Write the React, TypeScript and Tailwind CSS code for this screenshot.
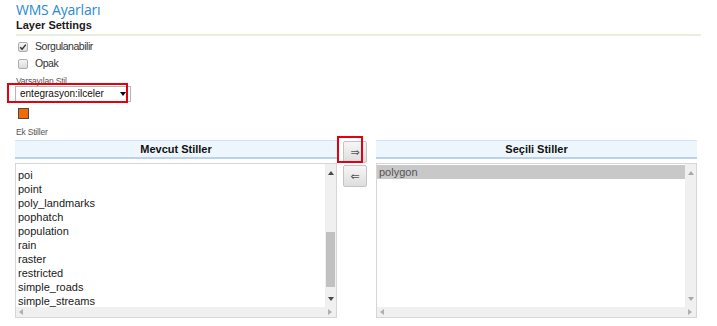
import React from "react";

const leftItems = [
  "poi",
  "point",
  "poly_landmarks",
  "pophatch",
  "population",
  "rain",
  "raster",
  "restricted",
  "simple_roads",
  "simple_streams",
];

function Tri({ dir, color }: { dir: "up" | "down" | "left" | "right"; color: string }) {
  const pts =
    dir === "up"
      ? "0,4 3,0 6,4"
      : dir === "down"
      ? "0,0 6,0 3,4"
      : dir === "left"
      ? "4,0 4,6 0,3"
      : "0,0 0,6 4,3";
  const w = dir === "up" || dir === "down" ? 6 : 4;
  const h = dir === "up" || dir === "down" ? 4 : 6;
  return (
    <svg width={w} height={h} viewBox={`0 0 ${w} ${h}`} className="block">
      <polygon points={pts} fill={color} />
    </svg>
  );
}

function Checkbox({ checked }: { checked?: boolean }) {
  return (
    <div className="w-[10px] h-[10px] rounded-[2px] border border-[#adadad] bg-gradient-to-b from-[#f4f4f4] to-[#dcdcdc] flex items-center justify-center">
      {checked && (
        <svg width="8" height="8" viewBox="0 0 8 8" className="block">
          <path d="M1.2 4.2 L3.1 6.1 L6.8 1.6" fill="none" stroke="#333" strokeWidth="1.4" />
        </svg>
      )}
    </div>
  );
}

function Header({ title }: { title: string }) {
  return (
    <div className="h-[19px] border-t border-t-[#d3e3f1] border-b-2 border-b-[#bcd3e7] bg-[#eef6fd] text-center text-[11px] font-bold leading-[16px] text-[#111]">
      {title}
    </div>
  );
}

function ListBox({
  children,
  thumb,
  padTop,
}: {
  children: React.ReactNode;
  thumb?: boolean;
  padTop: string;
}) {
  const arrow = thumb ? "#4a4a4a" : "#a8a8a8";
  return (
    <div className="mt-[4px] h-[155px] border border-[#d6d6d6] flex flex-col bg-white">
      <div className="flex h-[143px]">
        <div className={`flex-1 overflow-hidden ${padTop}`}>{children}</div>
        <div className="w-[11px] bg-[#f0f0f0] flex flex-col items-center">
          <div className="h-[17px] flex items-center justify-center">
            <Tri dir="up" color={arrow} />
          </div>
          {thumb ? (
            <>
              <div className="h-[51px]" />
              <div className="h-[55px] w-[9px] bg-[#c1c1c1]" />
              <div className="flex-1" />
            </>
          ) : (
            <div className="flex-1" />
          )}
          <div className="h-[17px] flex items-center justify-center">
            <Tri dir="down" color={arrow} />
          </div>
        </div>
      </div>
      <div className="h-[10px] bg-[#f0f0f0] flex items-center justify-between pl-[3px] pr-[4px]">
        <Tri dir="left" color="#b0b0b0" />
        <Tri dir="right" color="#b0b0b0" />
      </div>
    </div>
  );
}

function ArrowButton({ glyph }: { glyph: string }) {
  return (
    <div className="w-[24px] h-[22px] border border-[#c4c4c4] rounded-[2px] bg-gradient-to-b from-[#f6f6f6] to-[#dedede] flex items-center justify-center text-[11px] leading-none text-[#555] font-['DejaVu_Sans',sans-serif]">
      {glyph}
    </div>
  );
}

export default function App() {
  return (
    <div className="relative w-[717px] h-[326px] bg-white overflow-hidden pl-[15px] text-[#222] font-['Liberation_Sans',Arial,sans-serif]">
      <div className="pl-[1px] pt-[1px] h-[18px] text-[14px] leading-[17px] font-normal tracking-[-0.2px] text-[#2a8ad4] font-['Open_Sans',sans-serif]">
        WMS Ayarları
      </div>
      <div className="pl-[1px] text-[11px] font-bold leading-[14px] text-[#1a1a1a]">Layer Settings</div>
      <div className="mt-[2px] ml-[1px] w-[685px] h-[2px] bg-[#e6f0da]" />

      <div className="mt-[2px]">
        <div className="h-[17px] flex items-center gap-[7px] pl-[3px] text-[10.5px] leading-[17px] tracking-[-0.45px] text-[#333]">
          <Checkbox checked />
          <span>Sorgulanabilir</span>
        </div>
        <div className="h-[17px] flex items-center gap-[7px] pl-[3px] text-[10.5px] leading-[17px] tracking-[-0.45px] text-[#333]">
          <Checkbox />
          <span>Opak</span>
        </div>
      </div>

      <div className="mt-[4px] pl-[1px] text-[8.5px] leading-[10px] tracking-[-0.2px] text-[#555]">Varsayılan Stil</div>
      <div className="w-[116px] h-[16px] border border-[#b5b5b5] flex items-center justify-between pl-[4px] pr-[4px] text-[10px] leading-[14px] text-[#111]">
        <span>entegrasyon:ilceler</span>
        <Tri dir="down" color="#000" />
      </div>

      <div className="mt-[6px] ml-[3px] w-[11px] h-[11px] border border-[#4a4a4a] bg-[#f26a00]" />

      <div className="mt-[8px] pl-[1px] text-[8.5px] leading-[10px] tracking-[-0.2px] text-[#555]">Ek Stiller</div>

      <div className="mt-[3px] flex">
        <div className="w-[322px] flex flex-col">
          <Header title="Mevcut Stiller" />
          <ListBox thumb padTop="pt-[4px]">
            {leftItems.map((it) => (
              <div key={it} className="h-[14px] pl-[2px] text-[11px] leading-[14px] text-[#1a1a1a] whitespace-nowrap">
                {it}
              </div>
            ))}
          </ListBox>
        </div>

        <div className="w-[39px] pl-[6px] pt-[1px] flex flex-col gap-[2px]">
          <ArrowButton glyph="⇒" />
          <ArrowButton glyph="⇐" />
        </div>

        <div className="w-[321px] flex flex-col">
          <Header title="Seçili Stiller" />
          <ListBox padTop="pt-[1px]">
            <div className="h-[14px] pl-[2px] bg-[#c8c8c8] text-[11px] leading-[14px] text-[#555]">polygon</div>
          </ListBox>
        </div>
      </div>

      <div className="absolute left-[7px] top-[83px] w-[121px] h-[20px] border-2 border-[#e4000f]" />
      <div className="absolute left-[337px] top-[136px] w-[26px] h-[27px] border-2 border-[#e4000f]" />
    </div>
  );
}
